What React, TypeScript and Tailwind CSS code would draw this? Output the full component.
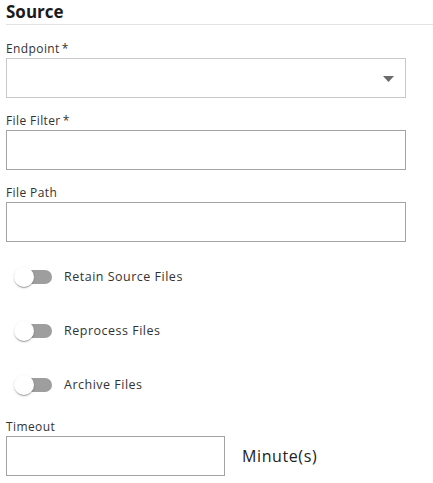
import React from "react";

function Field({ label, required, select }: { label: string; required?: boolean; select?: boolean }) {
  return (
    <div className="flex flex-col">
      <div className="h-[16px] leading-[16px] text-[12px] tracking-[0.4px] text-[#333] mb-[1px]">
        {label}
        {required && <span className="ml-[2px]">*</span>}
      </div>
      <div className={`relative h-[40px] w-[400px] border ${select ? "border-[#c8c8c8]" : "border-[#a3a3a3]"} bg-white`}>
        {select && (
          <svg className="absolute right-[11px] top-[17px]" width="11" height="6" viewBox="0 0 11 6">
            <path d="M0 0 L11 0 L5.5 6 Z" fill="#6b6b6b" />
          </svg>
        )}
      </div>
    </div>
  );
}

function Toggle({ label }: { label: string }) {
  return (
    <div className="h-[36px] flex items-center">
      <div className="relative w-[40px] h-[36px] ml-[8px] shrink-0">
        <div className="absolute left-[4px] top-[11px] w-[34px] h-[14px] rounded-full bg-[#9e9e9e]" />
        <div className="absolute left-0 top-[8px] w-[20px] h-[20px] rounded-full bg-white shadow-[0_2px_1px_-1px_rgba(0,0,0,0.2),0_1px_1px_0_rgba(0,0,0,0.14),0_1px_3px_0_rgba(0,0,0,0.12)]" />
      </div>
      <div className="ml-[10px] text-[12.5px] tracking-[0.5px] text-[#333]">{label}</div>
    </div>
  );
}

export default function App() {
  return (
    <div className="w-[433px] h-[483px] bg-white pl-[6px]" style={{ fontFamily: "'Open Sans', 'Noto Sans', sans-serif" }}>
      <div className="h-[25px] border-b border-[#e3e3e3] text-[17px] font-bold leading-[24px] text-[#1b1b1b]">Source</div>
      <div className="pt-[16px] flex flex-col gap-[15px]">
        <Field label="Endpoint" required select />
        <Field label="File Filter" required />
        <Field label="File Path" />
      </div>
      <div className="mt-[17px] flex flex-col gap-[18px]">
        <Toggle label="Retain Source Files" />
        <Toggle label="Reprocess Files" />
        <Toggle label="Archive Files" />
      </div>
      <div className="mt-[16px] flex flex-col">
        <div className="h-[16px] leading-[16px] text-[12px] tracking-[0.4px] text-[#333] mb-[1px]">Timeout</div>
        <div className="flex items-center">
          <div className="h-[40px] w-[219px] border border-[#a3a3a3]" />
          <div className="ml-[17px] text-[16px] tracking-[0.6px] text-[#222]">Minute(s)</div>
        </div>
      </div>
    </div>
  );
}
